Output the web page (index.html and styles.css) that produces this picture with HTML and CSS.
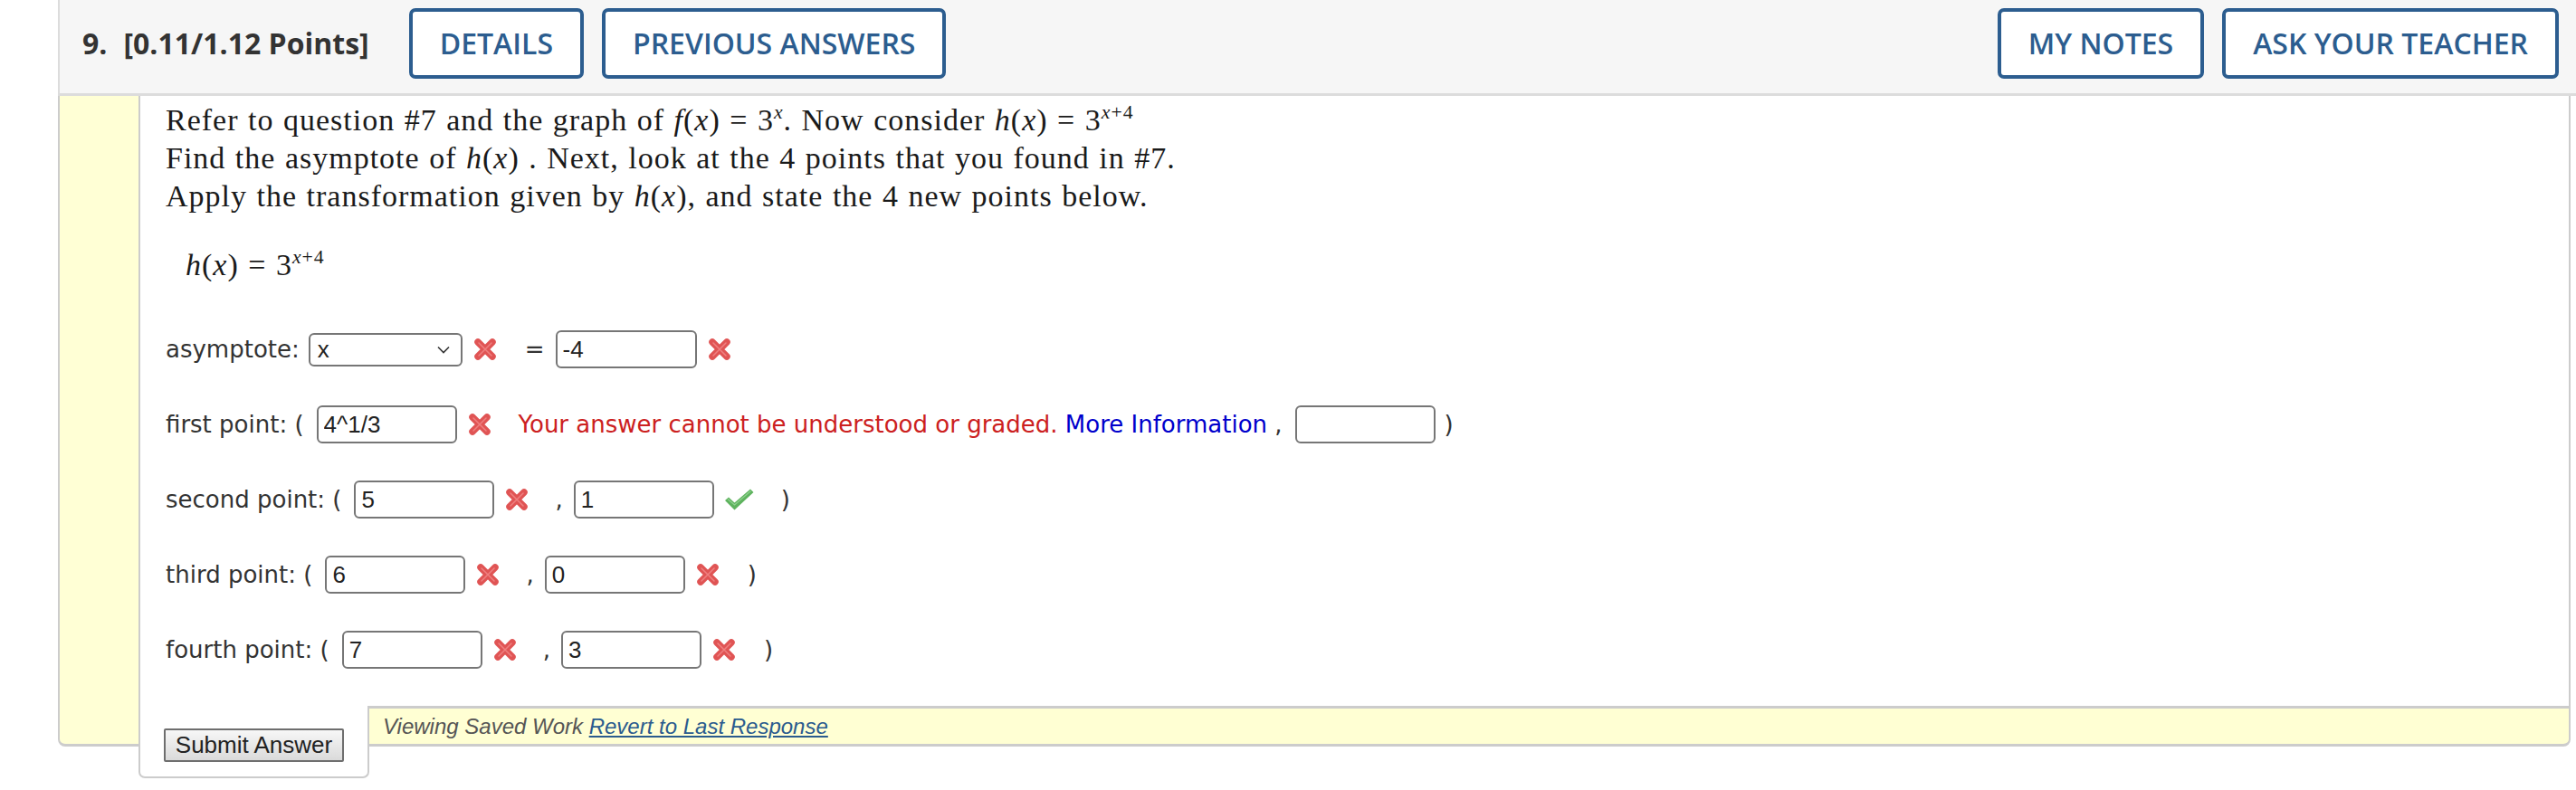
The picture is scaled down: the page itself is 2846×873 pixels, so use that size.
FILE: index.html
```html
<!DOCTYPE html>
<html>
<head>
<meta charset="utf-8">
<link rel="stylesheet" href="styles.css">
</head>
<body>
<div class="question">
  <div class="qhead">
    <div class="qtitle"><span class="qnum">9.</span>[0.11/1.12 Points]</div>
    <div class="btn">DETAILS</div>
    <div class="btn">PREVIOUS ANSWERS</div>
    <div class="spacer"></div>
    <div class="btn">MY NOTES</div>
    <div class="btn">ASK YOUR TEACHER</div>
  </div>
  <div class="qbody">
    <div class="strip"></div>
    <div class="panel">
      <div class="prompt">
        <div>Refer to question #7 and the graph of <i>f</i>(<i>x</i>) = 3<sup><i>x</i></sup>. Now consider <i>h</i>(<i>x</i>) = 3<sup><i>x</i>+4</sup></div>
        <div>Find the asymptote of <i>h</i>(<i>x</i>) . Next, look at the 4 points that you found in #7.</div>
        <div>Apply the transformation given by <i>h</i>(<i>x</i>), and state the 4 new points below.</div>
        <div class="eq"><i>h</i>(<i>x</i>) = 3<sup><i>x</i>+4</sup></div>
      </div>
      <div class="rows">
        <div class="row">
          <span>asymptote:</span>
          <div class="sel"><span>x</span><svg width="14" height="9" viewBox="0 0 14 9"><path d="M1 1.5 L7 7.5 L13 1.5" fill="none" stroke="#333" stroke-width="1.6"/></svg></div>
          <svg class="mark" width="28" height="28" viewBox="0 0 28 28"><path d="M6 6 L22 22 M22 6 L6 22" stroke="#e05454" stroke-width="7.5" stroke-linecap="round"/><path d="M7 7 L21 21 M21 7 L7 21" stroke="#ef8080" stroke-width="1.5" stroke-linecap="round"/></svg>
          <span class="eqsign">=</span>
          <input class="ans short" type="text" value="-4">
          <svg class="mark" width="28" height="28" viewBox="0 0 28 28"><path d="M6 6 L22 22 M22 6 L6 22" stroke="#e05454" stroke-width="7.5" stroke-linecap="round"/><path d="M7 7 L21 21 M21 7 L7 21" stroke="#ef8080" stroke-width="1.5" stroke-linecap="round"/></svg>
        </div>
        <div class="row">
          <span>first point: (</span>
          <input class="ans" type="text" value="4^1/3">
          <svg class="mark" width="28" height="28" viewBox="0 0 28 28"><path d="M6 6 L22 22 M22 6 L6 22" stroke="#e05454" stroke-width="7.5" stroke-linecap="round"/><path d="M7 7 L21 21 M21 7 L7 21" stroke="#ef8080" stroke-width="1.5" stroke-linecap="round"/></svg>
          <span class="msg"><span class="err">Your answer cannot be understood or graded.</span> <a class="more">More Information</a> ,</span>
          <input class="ans after" type="text" value="">
          <span class="close">)</span>
        </div>
        <div class="row">
          <span>second point: (</span>
          <input class="ans" type="text" value="5">
          <svg class="mark" width="28" height="28" viewBox="0 0 28 28"><path d="M6 6 L22 22 M22 6 L6 22" stroke="#e05454" stroke-width="7.5" stroke-linecap="round"/><path d="M7 7 L21 21 M21 7 L7 21" stroke="#ef8080" stroke-width="1.5" stroke-linecap="round"/></svg>
          <span class="comma">,</span>
          <input class="ans after" type="text" value="1">
          <svg class="mark" width="33" height="24" viewBox="0 0 33 24"><path d="M1 13 L5 9.5 L11.5 15.5 L29 0.5 L32.5 4 L11.5 23.5 Z" fill="#5eb35e"/><path d="M4 11.5 L11.5 18 L29.5 2.5" fill="none" stroke="#8fd08f" stroke-width="1.2"/></svg>
          <span class="close">)</span>
        </div>
        <div class="row">
          <span>third point: (</span>
          <input class="ans" type="text" value="6">
          <svg class="mark" width="28" height="28" viewBox="0 0 28 28"><path d="M6 6 L22 22 M22 6 L6 22" stroke="#e05454" stroke-width="7.5" stroke-linecap="round"/><path d="M7 7 L21 21 M21 7 L7 21" stroke="#ef8080" stroke-width="1.5" stroke-linecap="round"/></svg>
          <span class="comma">,</span>
          <input class="ans after" type="text" value="0">
          <svg class="mark" width="28" height="28" viewBox="0 0 28 28"><path d="M6 6 L22 22 M22 6 L6 22" stroke="#e05454" stroke-width="7.5" stroke-linecap="round"/><path d="M7 7 L21 21 M21 7 L7 21" stroke="#ef8080" stroke-width="1.5" stroke-linecap="round"/></svg>
          <span class="close">)</span>
        </div>
        <div class="row">
          <span>fourth point: (</span>
          <input class="ans" type="text" value="7">
          <svg class="mark" width="28" height="28" viewBox="0 0 28 28"><path d="M6 6 L22 22 M22 6 L6 22" stroke="#e05454" stroke-width="7.5" stroke-linecap="round"/><path d="M7 7 L21 21 M21 7 L7 21" stroke="#ef8080" stroke-width="1.5" stroke-linecap="round"/></svg>
          <span class="comma">,</span>
          <input class="ans after" type="text" value="3">
          <svg class="mark" width="28" height="28" viewBox="0 0 28 28"><path d="M6 6 L22 22 M22 6 L6 22" stroke="#e05454" stroke-width="7.5" stroke-linecap="round"/><path d="M7 7 L21 21 M21 7 L7 21" stroke="#ef8080" stroke-width="1.5" stroke-linecap="round"/></svg>
          <span class="close">)</span>
        </div>
      </div>
    </div>
    <div class="submitbox"><button class="submit" type="button">Submit Answer</button></div>
    <div class="savedbar">Viewing Saved Work&nbsp;<a class="revert">Revert to Last Response</a></div>
  </div>
</div>
</body>
</html>
```

FILE: styles.css
```css
* { box-sizing: border-box; }
body {
  margin: 0;
  background: #fff;
  font-family: "DejaVu Sans", Verdana, sans-serif;
}
.question {
  margin-left: 64px;
}
.qhead {
  height: 106px;
  background: #f6f6f6;
  border-left: 2px solid #dcdcdc;
  border-bottom: 3px solid #dcdcdc;
  display: flex;
  align-items: center;
  padding: 0 19px 8px 25px;
  font-family: "Open Sans", sans-serif;
}
.qtitle {
  font-weight: 700;
  font-size: 32px;
  color: #333;
  margin-right: 44px;
}
.qnum {
  margin-right: 18px;
}
.btn {
  height: 78px;
  border: 4px solid #2c5d8f;
  border-radius: 7px;
  background: #fff;
  color: #2c5d8f;
  font-weight: 600;
  font-size: 32px;
  padding: 0 30px;
  display: flex;
  align-items: center;
}
.btn + .btn { margin-left: 20px; }
.spacer { flex: 1; }

.qbody {
  margin-right: 6px;
  display: grid;
  grid-template-columns: 89px 255px 1fr;
  grid-template-rows: auto 45px 35px;
}
.strip {
  grid-column: 1;
  grid-row: 1 / 3;
  background: #ffffd5;
  border-left: 2px solid #cccccc;
  border-bottom: 3px solid #cccccc;
  border-bottom-left-radius: 8px;
}
.panel {
  grid-column: 2 / 4;
  grid-row: 1;
  background: #fff;
  border-left: 2px solid #cccccc;
  border-right: 2px solid #cccccc;
  padding: 6px 0 41px 28px;
}
.prompt {
  font-family: "Liberation Serif", "Times New Roman", serif;
  font-size: 34px;
  line-height: 42px;
  letter-spacing: 1px;
  word-spacing: 1px;
  color: #1a1a1a;
}
.prompt sup {
  font-size: 0.64em;
  line-height: 0;
  vertical-align: 0.6em;
}
.eq {
  margin-top: 34px;
  padding-left: 22px;
}
.rows {
  margin-top: 51px;
  display: flex;
  flex-direction: column;
  gap: 41px;
}
.row {
  display: flex;
  align-items: center;
  height: 42px;
  font-size: 26px;
  color: #333;
  white-space: nowrap;
}
.sel {
  margin-left: 10px;
  width: 170px;
  height: 37px;
  border: 2px solid #767676;
  border-radius: 6px;
  background: #fff;
  display: flex;
  align-items: center;
  justify-content: space-between;
  padding: 0 12px 0 8px;
  font-family: "Liberation Sans", Arial, sans-serif;
  font-size: 26px;
  color: #222;
}
.mark {
  margin-left: 11px;
  flex: none;
}
.eqsign {
  margin-left: 30px;
}
.ans {
  margin-left: 14px;
  width: 155px;
  height: 42px;
  border: 2px solid #767676;
  border-radius: 6px;
  padding: 0 6px;
  font-family: "Liberation Sans", Arial, sans-serif;
  font-size: 26px;
  color: #222;
  background: #fff;
  outline: none;
}
.ans.short { margin-left: 12px; width: 156px; }
.ans.after { margin-left: 12px; }
.comma { margin-left: 28px; }
.close { margin-left: 30px; }
.msg { margin-left: 29px; }
.err { color: #cc2020; }
.more { color: #0000cc; }
.row .msg + .ans { margin-left: 14px; }
.row .msg ~ .close { margin-left: 10px; }

.submitbox {
  grid-column: 2;
  grid-row: 2 / 4;
  background: #fff;
  border: 2px solid #cccccc;
  border-top: none;
  border-radius: 0 0 7px 7px;
  padding: 25px 0 0 26px;
}
.submit {
  display: block;
  width: 199px;
  height: 37px;
  margin: 0;
  padding: 0;
  border: 2px solid #6e6e6e;
  border-radius: 2px;
  background: linear-gradient(#f7f7f7, #dadada);
  font-family: "Liberation Sans", Arial, sans-serif;
  font-size: 26px;
  color: #222;
}
.savedbar {
  grid-column: 3;
  grid-row: 2;
  border-top: 3px solid #cccccc;
  border-bottom: 3px solid #cccccc;
  border-right: 2px solid #cccccc;
  border-bottom-right-radius: 8px;
  background: #ffffd3;
  padding-left: 15px;
  display: flex;
  align-items: center;
  font-family: "Liberation Sans", Arial, sans-serif;
  font-style: italic;
  font-size: 24px;
  color: #555;
}
.revert {
  color: #2a5b8e;
  text-decoration: underline;
}
```
